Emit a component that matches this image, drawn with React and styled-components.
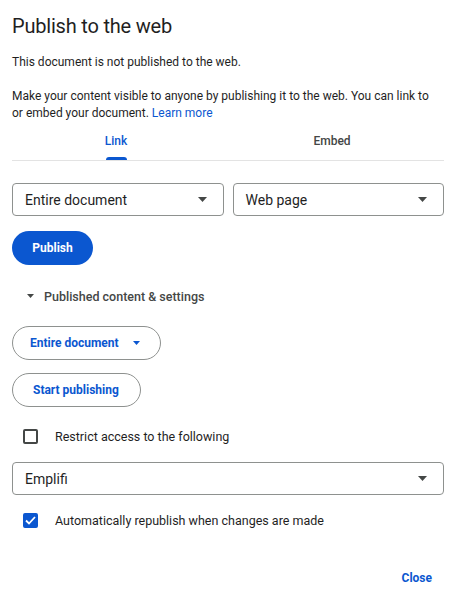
import React from "react";
import styled, { createGlobalStyle } from "styled-components";

const Global = createGlobalStyle`
  html, body { margin: 0; padding: 0; background: #fff; }
  body { font-family: Roboto, "Open Sans", "Liberation Sans", sans-serif; color: #1f1f1f; }
  * { box-sizing: border-box; }
`;

const Dialog = styled.div`
  width: 452px;
  height: 606px;
  padding: 11px 8px 0 12px;
  display: flex;
  flex-direction: column;
  align-items: stretch;
`;

const Title = styled.h1`
  margin: 0;
  font-size: 20px;
  font-weight: 400;
  letter-spacing: -0.2px;
  line-height: 30px;
  color: #1f1f1f;
`;

const Text = styled.p`
  margin: ${(p) => p.$mt || 0}px 0 0;
  max-width: 425px;
  font-size: 12px;
  line-height: 17px;
  color: #1f1f1f;
`;

const Link = styled.a`
  color: #0b57d0;
  text-decoration: none;
`;

const Tabs = styled.div`
  margin: 0 0 0 -4px;
  width: 432px;
  display: flex;
`;

const Tab = styled.div`
  flex: 1;
  display: flex;
  flex-direction: column;
  align-items: center;
  font-size: 12px;
  line-height: 17px;
  font-weight: 500;
  color: ${(p) => (p.$active ? "#0b57d0" : "#444746")};
  padding-top: 11px;
  height: 38px;
  position: relative;
  &::after {
    content: "";
    display: ${(p) => (p.$active ? "block" : "none")};
    position: absolute;
    bottom: 0;
    width: 21px;
    height: 3px;
    border-radius: 3px 3px 0 0;
    background: #0b57d0;
  }
`;

const Divider = styled.div`
  height: 1px;
  background: #e3e3e3;
`;

const SelectRow = styled.div`
  margin-top: 22px;
  display: flex;
  gap: 9px;
`;

const Select = styled.div`
  flex: ${(p) => (p.$grow ? "1 1 0" : "none")};
  height: 33px;
  border: 1px solid #8e918f;
  border-radius: 4px;
  display: flex;
  align-items: center;
  justify-content: space-between;
  padding: 0 16px 0 12px;
  font-size: 14px;
  color: #1f1f1f;
  margin-top: ${(p) => p.$mt || 0}px;
`;

const Caret = ({ color = "#444746", w = 9, h = 5 }) => (
  <svg width={w} height={h} viewBox="0 0 10 5" preserveAspectRatio="none">
    <path d="M0 0 L10 0 L5 5 Z" fill={color} />
  </svg>
);

const Primary = styled.button`
  margin-top: 15px;
  align-self: flex-start;
  height: 34px;
  width: 81px;
  border: none;
  border-radius: 17px;
  background: #0b57d0;
  color: #fff;
  font-family: inherit;
  font-size: 12px;
  font-weight: 700;
  padding: 0;
`;

const Disclosure = styled.div`
  margin-top: 22px;
  display: flex;
  align-items: center;
  gap: 10px;
  padding-left: 15px;
  font-size: 12.5px;
  font-weight: 500;
  color: #444746;
  height: 18px;
`;

const Pill = styled.button`
  margin-top: ${(p) => p.$mt}px;
  align-self: flex-start;
  height: 34px;
  border: 1px solid #8e918f;
  border-radius: 17px;
  background: #fff;
  color: #0b57d0;
  font-family: inherit;
  font-size: 12px;
  font-weight: 700;
  padding: 0 ${(p) => p.$pr}px 0 ${(p) => p.$pl}px;
  display: flex;
  align-items: center;
  gap: 14px;
`;

const CheckRow = styled.label`
  margin-top: ${(p) => p.$mt}px;
  display: flex;
  align-items: center;
  gap: 17px;
  padding-left: 11px;
  font-size: 12.5px;
  color: #1f1f1f;
  height: 18px;
`;

const Box = styled.span`
  width: 15px;
  height: 15px;
  border-radius: 2px;
  border: 2px solid ${(p) => (p.$checked ? "#0b57d0" : "#444746")};
  background: ${(p) => (p.$checked ? "#0b57d0" : "#fff")};
  display: flex;
  align-items: center;
  justify-content: center;
`;

const Footer = styled.div`
  margin-top: 41px;
  display: flex;
  justify-content: flex-end;
  padding-right: 12px;
`;

const TextButton = styled.button`
  border: none;
  background: none;
  padding: 0;
  font-family: inherit;
  font-size: 12px;
  line-height: 17px;
  font-weight: 700;
  color: #0b57d0;
`;

export default function App() {
  return (
    <>
      <Global />
      <Dialog>
        <Title>Publish to the web</Title>
        <Text $mt={13}>This document is not published to the web.</Text>
        <Text $mt={17}>
          Make your content visible to anyone by publishing it to the web. You can link to
          or embed your document. <Link>Learn more</Link>
        </Text>
        <Tabs>
          <Tab $active>Link</Tab>
          <Tab>Embed</Tab>
        </Tabs>
        <Divider />
        <SelectRow>
          <Select $grow>
            Entire document <Caret />
          </Select>
          <Select $grow>
            Web page <Caret />
          </Select>
        </SelectRow>
        <Primary>Publish</Primary>
        <Disclosure>
          <Caret w={7} h={4} />
          Published content &amp; settings
        </Disclosure>
        <Pill $mt={21} $pl={17} $pr={20}>
          Entire document <Caret color="#0b57d0" w={7} h={4} />
        </Pill>
        <Pill $mt={13} $pl={20} $pr={21}>
          Start publishing
        </Pill>
        <CheckRow $mt={20}>
          <Box />
          Restrict access to the following
        </CheckRow>
        <Select $mt={17}>
          Emplifi <Caret />
        </Select>
        <CheckRow $mt={16}>
          <Box $checked>
            <svg width="11" height="9" viewBox="0 0 11 9">
              <path d="M1 4.5 L4 7.5 L10 1" stroke="#fff" strokeWidth="1.8" fill="none" />
            </svg>
          </Box>
          Automatically republish when changes are made
        </CheckRow>
        <Footer>
          <TextButton>Close</TextButton>
        </Footer>
      </Dialog>
    </>
  );
}
